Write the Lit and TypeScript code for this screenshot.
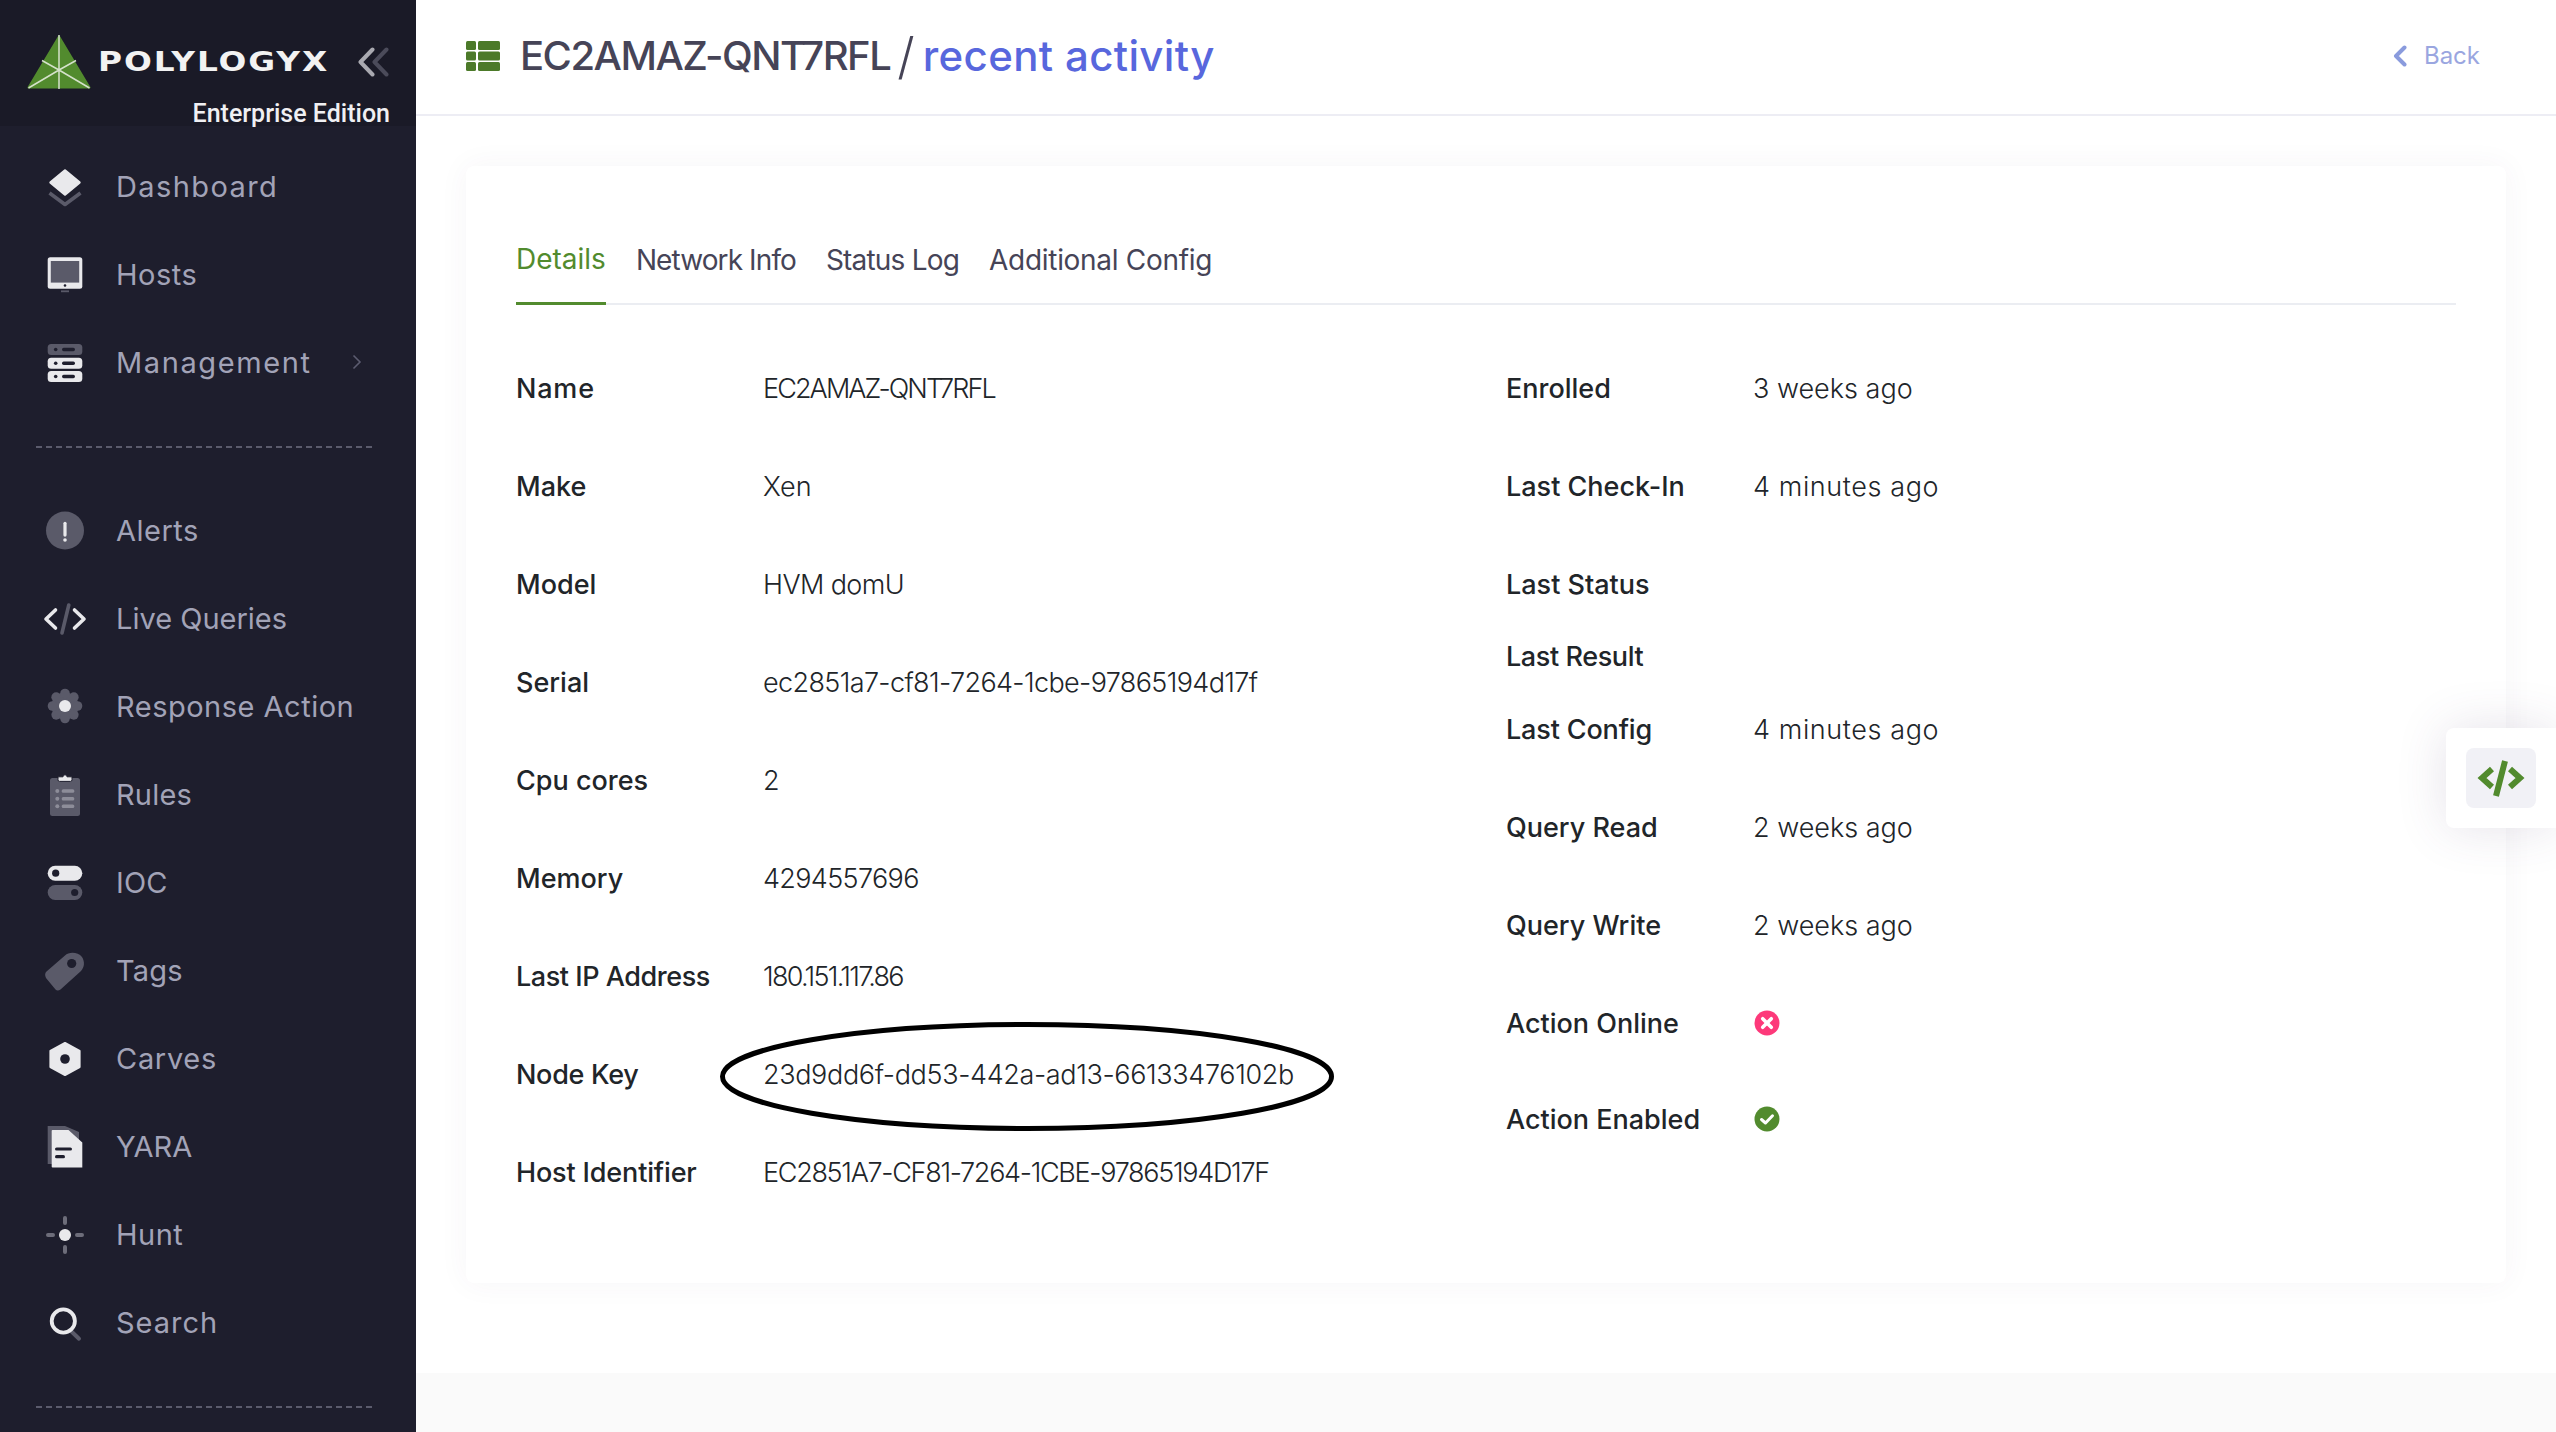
import { LitElement, html, css, svg } from 'lit';
import { customElement } from 'lit/decorators.js';

const W = '#e9e9ec';
const G = '#5a5a69';
const D = '#1e1e2d';

const bars = (y: number, fill: string) => svg`
  <rect x="6.7" y=${y} width="34.6" height="11" rx="3.5" fill=${fill}/>
  <circle cx="14.7" cy=${y + 5.5} r="1.8" fill=${D}/>
  <rect x="21" y=${y + 3.8} width="13" height="3.4" rx="1.7" fill=${D}/>`;

const listRow = (y: number) => svg`
  <circle cx="16.3" cy=${y} r="2" fill="#8d8d99"/>
  <rect x="20.7" y=${y - 1.8} width="12.6" height="3.6" rx="1.5" fill="#8d8d99"/>`;

const petals = [0, 45, 90, 135, 180, 225, 270, 315].map((a) => {
  const r = (a * Math.PI) / 180;
  return svg`<circle cx=${24 + 12.5 * Math.cos(r)} cy=${24 + 12.5 * Math.sin(r)} r="4.8" fill=${G}/>`;
});

const ICONS: Record<string, unknown> = {
  dashboard: svg`
    <path d="M8.5 31 L24 42.5 L39.5 31" fill="none" stroke=${G} stroke-width="3.6" stroke-linejoin="round"/>
    <path d="M24 8.5 L38.5 20.5 L24 32.5 L9.5 20.5 Z" fill=${W} stroke=${W} stroke-width="2.4" stroke-linejoin="round"/>`,
  hosts: svg`
    <rect x="6.7" y="7.3" width="34.6" height="31.4" rx="2.5" fill=${W}/>
    <rect x="9.8" y="11" width="28.4" height="21.6" fill=${G}/>
    <circle cx="24" cy="35.5" r="1.3" fill=${D}/>
    <rect x="20" y="40.4" width="8" height="1.8" fill=${G}/>`,
  management: svg`${bars(6, G)}${bars(19.7, W)}${bars(33, W)}`,
  alerts: svg`
    <circle cx="24" cy="24.5" r="19" fill=${G}/>
    <rect x="22.4" y="15.7" width="3.2" height="15" rx="1.6" fill=${W}/>
    <circle cx="24" cy="34" r="1.8" fill=${W}/>`,
  live: svg`
    <path d="M14.5 16 L5 25 L14.5 34 M33.5 16 L43 25 L33.5 34" fill="none" stroke=${W} stroke-width="3.6" stroke-linecap="round" stroke-linejoin="round"/>
    <path d="M27.8 11 L21 39" stroke=${G} stroke-width="3.6" stroke-linecap="round"/>`,
  response: svg`
    <circle cx="24" cy="24" r="13.5" fill=${G}/>${petals}
    <circle cx="24" cy="24" r="6" fill=${W}/>`,
  rules: svg`
    <rect x="9" y="8" width="30" height="38" rx="2.5" fill=${G}/>
    <path d="M17 6.8 h5 a2 2 0 0 1 4 0 h5 v3 a1.6 1.6 0 0 1 -1.6 1.6 h-10.8 a1.6 1.6 0 0 1 -1.6 -1.6 z" fill=${W} stroke=${D} stroke-width="1"/>
    ${listRow(21)}${listRow(28.7)}${listRow(36.3)}`,
  ioc: svg`
    <rect x="6.7" y="7.7" width="34.6" height="15" rx="7.5" fill=${W}/>
    <circle cx="14.7" cy="15.2" r="3.6" fill=${D}/>
    <rect x="6.7" y="27" width="34.6" height="15" rx="7.5" fill=${G}/>
    <circle cx="33.7" cy="34.5" r="3.6" fill=${D}/>`,
  tags: svg`
    <path d="M5.5 25.5 L24 9.5 C28 5.5 37 6 41 11 C44 16 43.5 21 40 25 L19.5 43.5 Q16.5 45.5 14.5 43.5 L5 32 Q3 28 5.5 25.5 Z" fill=${G}/>
    <circle cx="30.7" cy="17.5" r="4.6" fill=${D}/>`,
  carves: svg`
    <path d="M24 9 L38.6 17 V33 L24 41 L9.4 33 V17 Z" fill=${W} stroke=${W} stroke-width="2" stroke-linejoin="round"/>
    <circle cx="24" cy="25" r="4.8" fill=${D}/>`,
  yara: svg`
    <path d="M6.7 4 H24 L38 10 V42 H6.7 Z" fill=${G}/>
    <path d="M11.5 8 H27.5 L41.3 20.5 V45.5 H11.5 Q10.7 45.5 10.7 44.7 V8.8 Q10.7 8 11.5 8 Z" fill=${W}/>
    <rect x="14" y="25.4" width="17" height="3.2" rx="1.6" fill=${D}/>
    <rect x="14" y="33.1" width="10" height="3.2" rx="1.6" fill=${D}/>`,
  hunt: svg`
    <circle cx="24" cy="25" r="6" fill=${W}/>
    <path d="M24 8 V13 M24 37 V42 M7 25 H12 M36 25 H41" stroke="#6d6d7a" stroke-width="4" stroke-linecap="round"/>`,
  search: svg`
    <path d="M31 34 L38 40.7" stroke=${G} stroke-width="4" stroke-linecap="round"/>
    <circle cx="22.3" cy="23" r="11.6" fill="none" stroke=${W} stroke-width="3.8"/>`,
};

// track = letter-spacing in px, the stand-in font runs wider or narrower per word
interface NavEntry {
  icon: string;
  label: string;
  track: number;
  more?: boolean;
}

const NAV_TOP: NavEntry[] = [
  { icon: 'dashboard', label: 'Dashboard', track: 1.4 },
  { icon: 'hosts', label: 'Hosts', track: 0.5 },
  { icon: 'management', label: 'Management', track: 1.6, more: true },
];

const NAV_MAIN: NavEntry[] = [
  { icon: 'alerts', label: 'Alerts', track: 0.5 },
  { icon: 'live', label: 'Live Queries', track: 0 },
  { icon: 'response', label: 'Response Action', track: 0.5 },
  { icon: 'rules', label: 'Rules', track: 0.2 },
  { icon: 'ioc', label: 'IOC', track: 0.2 },
  { icon: 'tags', label: 'Tags', track: 0.2 },
  { icon: 'carves', label: 'Carves', track: 0.7 },
  { icon: 'yara', label: 'YARA', track: 0 },
  { icon: 'hunt', label: 'Hunt', track: 0.5 },
  { icon: 'search', label: 'Search', track: 1 },
];

interface Row {
  label: string;
  value: string;
  track?: number;
  labelTrack?: number;
  cls?: string;
}

const LEFT: Row[] = [
  { label: 'Name', value: 'EC2AMAZ-QNT7RFL', track: -1.9, labelTrack: 0.8 },
  { label: 'Make', value: 'Xen' },
  { label: 'Model', value: 'HVM domU', track: -0.6 },
  { label: 'Serial', value: 'ec2851a7-cf81-7264-1cbe-97865194d17f', track: -0.63 },
  { label: 'Cpu cores', value: '2' },
  { label: 'Memory', value: '4294557696', track: -0.65 },
  { label: 'Last IP Address', value: '180.151.117.86', track: -1.7, labelTrack: -0.45 },
  { label: 'Node Key', value: '23d9dd6f-dd53-442a-ad13-66133476102b', track: -0.36, labelTrack: -0.3 },
  { label: 'Host Identifier', value: 'EC2851A7-CF81-7264-1CBE-97865194D17F', track: -1.3, labelTrack: -0.15 },
];

const RIGHT: Row[] = [
  { label: 'Enrolled', value: '3 weeks ago' },
  { label: 'Last Check-In', value: '4 minutes ago', track: 0.6 },
  { label: 'Last Status', value: '' },
  { label: 'Last Result', value: '', cls: 'compact', labelTrack: -0.4 },
  { label: 'Last Config', value: '4 minutes ago', track: 0.6, labelTrack: -0.15 },
  { label: 'Query Read', value: '2 weeks ago' },
  { label: 'Query Write', value: '2 weeks ago' },
  { label: 'Action Online', value: 'off' },
  { label: 'Action Enabled', value: 'on', cls: 'short' },
];

const TABS = [
  { label: 'Details', track: 0 },
  { label: 'Network Info', track: -0.9 },
  { label: 'Status Log', track: -0.8 },
  { label: 'Additional Config', track: -0.3 },
];

@customElement('app-root')
export class AppRoot extends LitElement {
  static styles = css`
    :host {
      display: flex;
      height: 1432px;
      overflow: hidden;
      background: #fff;
      font-family: Inter, 'Noto Sans', sans-serif;
      color: #212529;
    }
    .sidebar {
      flex: 0 0 416px;
      background: #1e1e2d;
    }
    .brand {
      height: 126px;
      box-sizing: border-box;
      background: #1a1a27;
      padding: 35px 26px 0 27px;
    }
    .brand-top {
      display: flex;
      align-items: center;
      height: 54px;
    }
    .wordmark {
      margin-left: 7px;
      width: 232px;
      font-family: 'DejaVu Sans', sans-serif;
      font-size: 26px;
      font-weight: 700;
      line-height: 1;
      letter-spacing: 1.5px;
      color: #f2f2f2;
      white-space: nowrap;
      transform: scaleX(1.26);
      transform-origin: left center;
    }
    .collapse {
      margin-left: auto;
      display: block;
    }
    .edition {
      margin-top: 10px;
      text-align: right;
      font-family: Roboto, sans-serif;
      font-size: 25px;
      font-weight: 500;
      line-height: 30px;
      color: #f0f0f3;
    }
    nav {
      padding-top: 16px;
    }
    .item {
      display: flex;
      align-items: center;
      height: 88px;
      padding-left: 41px;
      font-size: 29px;
      font-weight: 400;
      color: #a2a3b7;
    }
    .item svg {
      flex: none;
      margin-right: 27px;
    }
    .item .more {
      margin: 0 0 0 auto;
      position: relative;
      right: 54px;
    }
    .dash {
      height: 2px;
      margin: 40px 40px 38px 36px;
      background: repeating-linear-gradient(to right, #5b5b6c 0 6px, transparent 6px 10px);
    }
    .main {
      flex: 1;
      min-width: 0;
      display: flex;
      flex-direction: column;
    }
    .topbar {
      flex: 0 0 111px;
      display: flex;
      align-items: center;
      padding: 0 76px 3px 50px;
      border-bottom: 2px solid #ededf4;
    }
    .title {
      display: flex;
      align-items: center;
      margin-left: 20px;
      font-size: 40px;
      line-height: 50px;
      font-weight: 500;
      letter-spacing: -1.5px;
      color: #464457;
    }
    .title .sep {
      font-size: 50px;
      font-weight: 300;
      letter-spacing: 0;
      margin: 0 8px 0 7px;
    }
    .title .sub {
      font-size: 42px;
      letter-spacing: 0.35px;
      color: #5867dd;
    }
    .back {
      margin-left: auto;
      display: flex;
      align-items: center;
      gap: 17px;
      font-size: 24px;
      color: #9aa6e0;
    }
    .content {
      flex: 0 0 1257px;
      box-sizing: border-box;
      padding: 50px;
      background: #fff;
    }
    .footer {
      flex: 1;
      background: #fafafa;
    }
    .card {
      position: relative;
      height: 1117px;
      box-sizing: border-box;
      padding: 0 50px;
      background: #fff;
      border-radius: 8px;
      box-shadow: 0 0 30px rgba(82, 63, 105, 0.05);
    }
    .tabs {
      display: flex;
      gap: 30px;
      height: 139px;
      box-sizing: border-box;
      border-bottom: 2px solid #ebedf2;
    }
    .tab {
      display: flex;
      align-items: center;
      box-sizing: border-box;
      height: 139px;
      padding-top: 49px;
      font-size: 28px;
      font-weight: 400;
      color: #464457;
    }
    .tab.active {
      color: #528b2e;
      border-bottom: 3px solid #528b2e;
    }
    .grid {
      display: flex;
      margin-top: 34px;
    }
    .col {
      flex: 0 0 990px;
    }
    .col + .col {
      flex: 1;
    }
    .row {
      display: flex;
      align-items: center;
      height: 98px;
      font-size: 27px;
    }
    .row.compact {
      height: 47px;
    }
    .row.short {
      height: 94px;
    }
    .label {
      flex: 0 0 247px;
      font-weight: 500;
    }
    .value {
      font-weight: 300;
      white-space: nowrap;
    }
    .status {
      display: block;
      margin-left: 1px;
    }
    .ring {
      position: absolute;
      left: 254px;
      top: 856px;
    }
    .float {
      position: absolute;
      top: 728px;
      right: 0;
      width: 110px;
      height: 100px;
      box-sizing: border-box;
      padding: 20px;
      background: #fff;
      border-radius: 8px 0 0 8px;
      box-shadow: 0 0 50px rgba(82, 63, 105, 0.15);
    }
    .float-btn {
      width: 70px;
      height: 60px;
      background: #f1f1f6;
      border-radius: 8px;
    }
  `;

  private navItem(n: NavEntry) {
    return html`
      <div class="item">
        <svg width="48" height="48" viewBox="0 0 48 48">${ICONS[n.icon]}</svg>
        <span style="letter-spacing:${n.track}px">${n.label}</span>
        ${n.more
          ? html`<svg class="more" width="10" height="16" viewBox="0 0 10 16"><path d="M1.5 1.5 L8 8 L1.5 14.5" fill="none" stroke="#5c5c70" stroke-width="1.6"/></svg>`
          : ''}
      </div>
    `;
  }

  private renderValue(r: Row) {
    if (r.value === 'off') {
      return html`<svg class="status" width="26" height="26" viewBox="0 0 26 26">
        <circle cx="13" cy="13" r="12.5" fill="#fd397a"/>
        <path d="M8.7 8.7 L17.3 17.3 M17.3 8.7 L8.7 17.3" stroke="#fff" stroke-width="3.6" stroke-linecap="round"/>
      </svg>`;
    }
    if (r.value === 'on') {
      return html`<svg class="status" width="26" height="26" viewBox="0 0 26 26">
        <circle cx="13" cy="13" r="12.5" fill="#528b2e"/>
        <path d="M7.5 13.5 L11.5 17 L18.5 9.8" fill="none" stroke="#fff" stroke-width="3" stroke-linecap="round" stroke-linejoin="round"/>
      </svg>`;
    }
    return html`<span class="value" style="letter-spacing:${r.track ?? 0}px">${r.value}</span>`;
  }

  private renderRow(r: Row) {
    return html`
      <div class="row ${r.cls ?? ''}">
        <span class="label" style="letter-spacing:${r.labelTrack ?? 0}px">${r.label}</span>
        ${this.renderValue(r)}
      </div>
    `;
  }

  render() {
    return html`
      <aside class="sidebar">
        <div class="brand">
          <div class="brand-top">
            <svg width="64" height="54" viewBox="0 0 64 54">
              <path d="M32 1.5 L62.5 52.5 H1.5 Z" fill="#528b2e" stroke="#528b2e" stroke-width="2" stroke-linejoin="round"/>
              <path d="M32 0 V54 M32 35 L1.5 53 M32 35 L62.5 53 M32 35 L49 25.5 M32 35 L15 25.5" stroke="#d5e2cb" stroke-width="1.5"/>
            </svg>
            <span class="wordmark">POLYLOGYX</span>
            <svg class="collapse" width="32" height="30" viewBox="0 0 32 30">
              <path d="M28.5 2.5 L16.5 15 L28.5 27.5" fill="none" stroke="#4b4b5a" stroke-width="4" stroke-linecap="round" stroke-linejoin="round"/>
              <path d="M14.5 2.5 L2.5 15 L14.5 27.5" fill="none" stroke="#a9a9b0" stroke-width="4" stroke-linecap="round" stroke-linejoin="round"/>
            </svg>
          </div>
          <div class="edition">Enterprise Edition</div>
        </div>
        <nav>
          ${NAV_TOP.map((n) => this.navItem(n))}
          <div class="dash"></div>
          ${NAV_MAIN.map((n) => this.navItem(n))}
          <div class="dash"></div>
        </nav>
      </aside>
      <div class="main">
        <header class="topbar">
          <svg width="34" height="30" viewBox="0 0 34 30">
            ${[0, 10.5, 21].map(
              (y) => svg`
                <rect x="0" y=${y} width="10" height="9" rx="1.5" fill="#4c7a29"/>
                <rect x="12" y=${y} width="22" height="9" rx="1.5" fill="#4c7a29"/>`
            )}
          </svg>
          <div class="title">EC2AMAZ-QNT7RFL<span class="sep">/</span><span class="sub">recent activity</span></div>
          <div class="back">
            <svg width="14" height="22" viewBox="0 0 14 22"><path d="M11.5 2.5 L3 11 L11.5 19.5" fill="none" stroke="#8a9bdd" stroke-width="4" stroke-linecap="round" stroke-linejoin="round"/></svg>
            <span>Back</span>
          </div>
        </header>
        <section class="content">
          <div class="card">
            <div class="tabs">
              ${TABS.map(
                (t, i) => html`<div class="tab ${i === 0 ? 'active' : ''}" style="letter-spacing:${t.track}px">${t.label}</div>`
              )}
            </div>
            <div class="grid">
              <div class="col">${LEFT.map((r) => this.renderRow(r))}</div>
              <div class="col">${RIGHT.map((r) => this.renderRow(r))}</div>
            </div>
            <svg class="ring" width="614" height="109" viewBox="0 0 614 109">
              <ellipse cx="307" cy="54.5" rx="304.5" ry="52" fill="none" stroke="#000" stroke-width="5"/>
            </svg>
          </div>
        </section>
        <div class="footer"></div>
      </div>
      <div class="float">
        <div class="float-btn">
          <svg width="70" height="60" viewBox="0 0 70 60">
            <path d="M26 21 L16 30 L26 39 M44 21 L54 30 L44 39 M39 13 L30 48" fill="none" stroke="#528b2e" stroke-width="6"/>
          </svg>
        </div>
      </div>
    `;
  }
}
